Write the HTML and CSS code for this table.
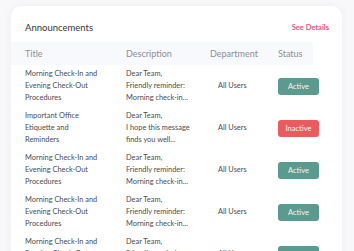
FILE: index.html
```html
<!DOCTYPE html>
<html lang="en">
<head>
    <meta charset="UTF-8">
    <meta name="viewport" content="width=device-width, initial-scale=1.0">
    <title>Announcements</title>
    <link rel="stylesheet" href="styles.css">
</head>
<body>
    <div class="card">
        <div class="card-header">
            <h2>Announcements</h2>
            <a href="#" class="see-details">See Details</a>
        </div>

        <table class="announcements">
            <colgroup>
                <col class="col-title">
                <col class="col-desc">
                <col class="col-dept">
                <col class="col-status">
            </colgroup>
            <thead>
                <tr>
                    <th>Title</th>
                    <th>Description</th>
                    <th>Department</th>
                    <th>Status</th>
                </tr>
            </thead>
            <tbody>
                <tr>
                    <td>Morning Check-In and<br>Evening Check-Out<br>Procedures</td>
                    <td>Dear Team,<br>Friendly reminder:<br>Morning check-in...</td>
                    <td class="dept">All Users</td>
                    <td><span class="badge active">Active</span></td>
                </tr>
                <tr>
                    <td>Important Office<br>Etiquette and<br>Reminders</td>
                    <td>Dear Team,<br>I hope this message<br>finds you well...</td>
                    <td class="dept">All Users</td>
                    <td><span class="badge inactive">Inactive</span></td>
                </tr>
                <tr>
                    <td>Morning Check-In and<br>Evening Check-Out<br>Procedures</td>
                    <td>Dear Team,<br>Friendly reminder:<br>Morning check-in...</td>
                    <td class="dept">All Users</td>
                    <td><span class="badge active">Active</span></td>
                </tr>
                <tr>
                    <td>Morning Check-In and<br>Evening Check-Out<br>Procedures</td>
                    <td>Dear Team,<br>Friendly reminder:<br>Morning check-in...</td>
                    <td class="dept">All Users</td>
                    <td><span class="badge active">Active</span></td>
                </tr>
                <tr>
                    <td>Morning Check-In and<br>Evening Check-Out<br>Procedures</td>
                    <td>Dear Team,<br>Friendly reminder:<br>Morning check-in...</td>
                    <td class="dept">All Users</td>
                    <td><span class="badge active">Active</span></td>
                </tr>
            </tbody>
        </table>
    </div>
</body>
</html>
```

FILE: styles.css
```css
html, body {
    height: 100%;
    overflow: hidden;
}
body {
    margin: 0;
    font-family: Lato, "Liberation Sans", sans-serif;
    background-color: #f8f8fa;
    color: #4a4c52;
}
.card {
    margin: 6px 12px 0 11px;
    height: 300px;
    background-color: #fff;
    border-radius: 10px;
    box-shadow: 0 0 8px rgba(40, 40, 70, 0.05);
}
.card-header {
    display: flex;
    justify-content: space-between;
    align-items: center;
    height: 36px;
    padding: 6px 13px 0 14px;
    box-sizing: border-box;
}
.card-header h2 {
    margin: 0;
    font-size: 9.5px;
    font-weight: normal;
    color: #35373d;
}
.see-details {
    font-size: 7.5px;
    font-weight: bold;
    color: #f0508c;
    text-decoration: none;
}
.announcements {
    width: 302px;
    table-layout: fixed;
    border-collapse: collapse;
    font-size: 7.4px;
}
.col-title { width: 115px; }
.col-desc { width: 84px; }
.col-dept { width: 68px; }
.col-status { width: 35px; }
.announcements th {
    height: 23px;
    padding: 0;
    background-color: #f8f9fc;
    text-align: left;
    font-size: 9px;
    font-weight: normal;
    color: #8b8e9a;
}
.announcements th:first-child,
.announcements td:first-child {
    padding-left: 14px;
}
.announcements td {
    padding: 3px 0;
    line-height: 12px;
    vertical-align: middle;
    white-space: nowrap;
}
.announcements td.dept {
    padding-left: 8px;
}
.badge {
    display: inline-block;
    width: 41px;
    height: 17px;
    line-height: 17px;
    border-radius: 3px;
    text-align: center;
    font-size: 7.5px;
    color: #f2f7f6;
}
.badge.active {
    background-color: #5b9a8f;
}
.badge.inactive {
    background-color: #ea5b60;
}
```
